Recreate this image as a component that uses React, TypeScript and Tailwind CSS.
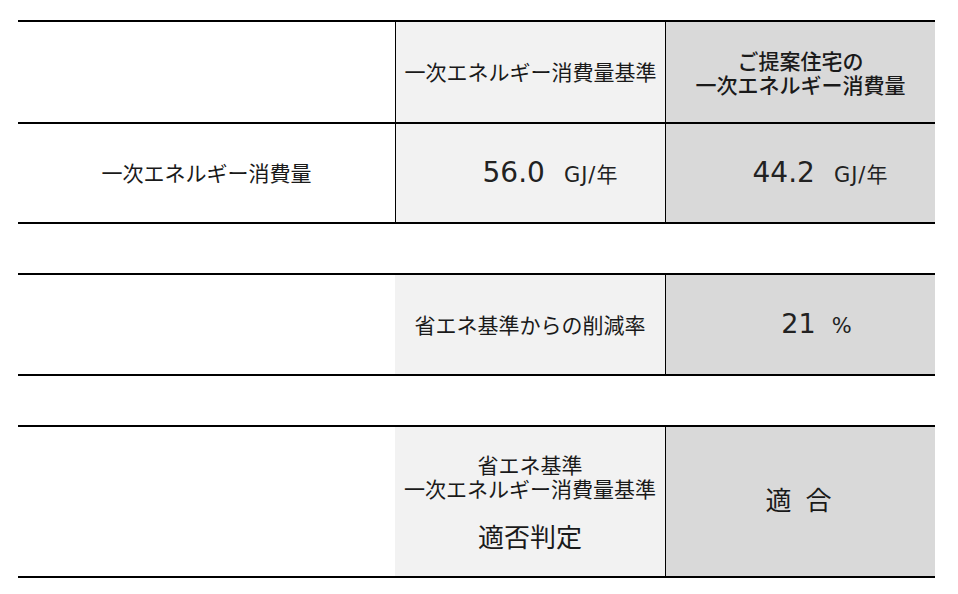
import React from "react";

const jp = { fontFamily: '"Noto Sans CJK JP", "Noto Sans", sans-serif' };
const num = { fontFamily: '"DejaVu Sans", "Noto Sans CJK JP", sans-serif' };

function Value({ value, unit }: { value: string; unit: string }) {
  return (
    <div className="flex items-baseline pl-[40px] text-[#222]">
      <span className="text-[28px]" style={num}>
        {value}
      </span>
      <span className="ml-[19px] text-[21px] tracking-[1px]" style={num}>
        {unit}
      </span>
    </div>
  );
}

export default function App() {
  return (
    <div className="min-h-[594px] bg-white pt-[20px] pl-[18px] text-[#1a1a1a]" style={jp}>
      {/* 一次エネルギー消費量 */}
      <div className="grid w-[917px] grid-cols-[377px_270px_270px] border-y-2 border-black">
        <div className="h-[100px]" />
        <div className="flex h-[100px] items-center justify-center border-l border-black bg-[#f2f2f2] text-[21px]">
          一次エネルギー消費量基準
        </div>
        <div className="flex h-[100px] items-center justify-center border-l border-black bg-[#d9d9d9]">
          <p className="text-center text-[21px] leading-[24px] font-medium">
            ご提案住宅の
            <br />
            一次エネルギー消費量
          </p>
        </div>
        <div className="col-span-3 h-[2px] bg-black" />
        <div className="flex h-[98px] items-center justify-center text-[21px]">
          一次エネルギー消費量
        </div>
        <div className="flex h-[98px] items-center justify-center border-l border-black bg-[#f2f2f2]">
          <Value value="56.0" unit="GJ/年" />
        </div>
        <div className="flex h-[98px] items-center justify-center border-l border-black bg-[#d9d9d9]">
          <Value value="44.2" unit="GJ/年" />
        </div>
      </div>

      {/* 削減率 */}
      <div className="mt-[49px] grid w-[917px] grid-cols-[377px_270px_270px] border-y-2 border-black">
        <div className="h-[99px]" />
        <div className="flex h-[99px] items-center justify-center bg-[#f2f2f2] text-[21px]">
          省エネ基準からの削減率
        </div>
        <div className="flex h-[99px] items-center justify-center border-l border-black bg-[#d9d9d9]">
          <div className="flex items-baseline pl-[32px] text-[#222]">
            <span className="text-[27px]" style={num}>
              21
            </span>
            <span className="ml-[16px] text-[21px]" style={num}>
              %
            </span>
          </div>
        </div>
      </div>

      {/* 適否判定 */}
      <div className="mt-[49px] grid w-[917px] grid-cols-[377px_270px_270px] border-y-2 border-black">
        <div className="h-[149px]" />
        <div className="flex h-[149px] flex-col items-center justify-center bg-[#f2f2f2]">
          <p className="text-center text-[21px] leading-[24px]">
            省エネ基準
            <br />
            一次エネルギー消費量基準
          </p>
          <div className="mt-[21px] h-[30px] text-[26px] leading-[30px]">適否判定</div>
        </div>
        <div className="flex h-[149px] items-center justify-center border-l border-black bg-[#d9d9d9] pb-[6px] text-[26px] tracking-[4px]">
          適 合
        </div>
      </div>
    </div>
  );
}
